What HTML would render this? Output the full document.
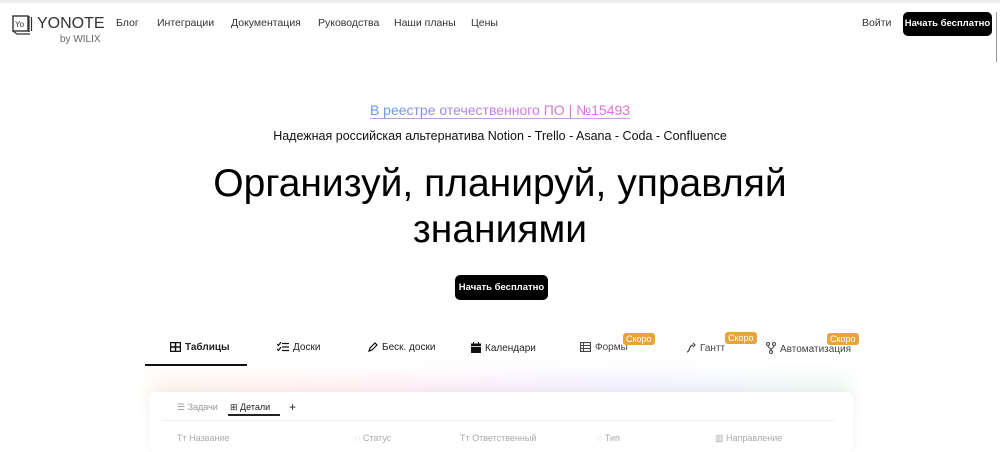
<!DOCTYPE html>
<html><head><meta charset="utf-8"><style>
*{margin:0;padding:0;box-sizing:border-box}
body{width:1000px;height:442px;overflow:hidden;background:#fff;font-family:"Liberation Sans",sans-serif;color:#111;position:relative}
.top{position:absolute;top:0;left:0;right:0;height:3px;background:#ececec}
.sb{position:absolute;right:3px;top:12px;width:1px;height:50px;background:#999}
.logo{position:absolute;left:12px;top:13px}
.nav{position:absolute;top:17px;left:116px;font-size:10.5px;color:#333}
.nav span{position:absolute;white-space:nowrap}
.btn{position:absolute;background:#000;color:#fff;font-size:9.5px;font-weight:bold;border-radius:5px;text-align:center;white-space:nowrap}
.c{position:absolute;left:0;right:0;text-align:center}
.tabs span{position:absolute;top:342px;font-size:10px;color:#222;white-space:nowrap}
.badge{position:absolute;background:#e8a33d;color:#fff;font-size:9px;border-radius:3px;padding:1px 3px}
.ic{display:inline-block;vertical-align:-2px;margin-right:4px}
</style></head><body>
<div class="top"></div><div class="sb"></div>
<div class="logo">
<svg width="22" height="22" viewBox="0 0 22 22"><rect x="1" y="3" width="15" height="15" fill="none" stroke="#333" stroke-width="1.4"/><path d="M17 3v16M19.5 4v14M1 18l4 3h13" fill="none" stroke="#333" stroke-width="1.2"/><text x="3" y="14" font-size="8" font-family="Liberation Sans" fill="#333">Yo</text></svg>
<span style="position:absolute;left:25px;top:2px;font-size:16px;color:#333">YONOTE</span>
<span style="position:absolute;left:48px;top:21px;font-size:10px;color:#666;white-space:nowrap">by WILIX</span>
</div>
<div class="nav">
<span style="left:0">Блог</span><span style="left:41px">Интеграции</span><span style="left:115px">Документация</span><span style="left:202px">Руководства</span><span style="left:278px">Наши планы</span><span style="left:355px">Цены</span>
</div>
<span style="position:absolute;left:862px;top:17px;font-size:10.5px;color:#333">Войти</span>
<div class="btn" style="left:903px;top:12px;width:89px;height:24px;line-height:24px">Начать бесплатно</div>
<div class="c" style="top:102px;font-size:14px"><span style="background:linear-gradient(90deg,#5b9be8,#c97be0,#e36cd8);-webkit-background-clip:text;color:transparent;border-bottom:1px solid #c39be8">В реестре отечественного ПО | №15493</span></div>
<div class="c" style="top:129px;font-size:12.5px;color:#111">Надежная российская альтернатива Notion - Trello - Asana - Coda - Confluence</div>
<div class="c" style="top:161px;font-size:39px;line-height:46px;color:#000">Организуй, планируй, управляй<br>знаниями</div>
<div class="btn" style="left:455px;top:275px;width:93px;height:25px;line-height:25px">Начать бесплатно</div>
<div style="position:absolute;left:150px;top:375px;width:700px;height:30px;background:linear-gradient(90deg,#fff5ec,#ffeef4,#f2efff,#eef9f2);filter:blur(8px)"></div>
<div class="tabs">
<span style="left:170px;font-weight:bold"><svg class="ic" width="11" height="10"><rect x=".5" y=".5" width="10" height="9" fill="none" stroke="#111" stroke-width="1.5"/><path d="M0 5h11M5.5 0v10" stroke="#111" stroke-width="1.5"/></svg>Таблицы</span>
<span style="left:277px"><svg class="ic" width="12" height="10"><path d="M0 2l1.5 1.5L4 0M0 7l1.5 1.5L4 5M5 1.5h7M5 5h7M5 8.5h7" stroke="#111" fill="none" stroke-width="1.2"/></svg>Доски</span>
<span style="left:368px"><svg class="ic" width="10" height="10"><path d="M1 9l1-3 5-5 2 2-5 5z" stroke="#111" fill="none" stroke-width="1.2"/></svg>Беск. доски</span>
<span style="left:471px"><svg class="ic" width="10" height="11"><rect x="0" y="1.5" width="10" height="9.5" fill="#111"/><path d="M2.5 0v2M7.5 0v2" stroke="#111"/><path d="M0 4.5h10" stroke="#fff" stroke-width=".8"/></svg>Календари</span>
<span style="left:580px;color:#444"><svg class="ic" width="11" height="10"><rect x=".5" y=".5" width="10" height="9" fill="none" stroke="#444" stroke-width="1.2"/><path d="M0 3.5h11M0 6.5h11M3.5 0v10" stroke="#444"/></svg>Формы</span>
<span style="left:686px;color:#444"><svg class="ic" width="10" height="11"><path d="M1 10c3 0 2-7 6-7M7 1l2 2-2 2" stroke="#444" fill="none" stroke-width="1.2"/></svg>Гантт</span>
<span style="left:766px;color:#444"><svg class="ic" width="10" height="12"><circle cx="2" cy="2" r="1.5" fill="none" stroke="#444"/><circle cx="8" cy="2" r="1.5" fill="none" stroke="#444"/><circle cx="5" cy="10" r="1.5" fill="none" stroke="#444"/><path d="M2 3.5c0 3 3 2 3 5M8 3.5c0 3-3 2-3 5" stroke="#444" fill="none"/></svg>Автоматизация</span>
</div>
<div class="badge" style="left:623px;top:333px">Скоро</div>
<div class="badge" style="left:725px;top:332px">Скоро</div>
<div class="badge" style="left:827px;top:333px">Скоро</div>
<div style="position:absolute;left:145px;top:364px;width:102px;height:2px;background:#111"></div>
<div style="position:absolute;left:149px;top:392px;width:704px;height:60px;background:#fff;border-radius:6px;box-shadow:0 0 10px rgba(0,0,0,0.06)"></div>
<span style="position:absolute;left:177px;top:402px;font-size:9px;color:#999">☰ Задачи</span>
<span style="position:absolute;left:230px;top:402px;font-size:9px;color:#222">⊞ Детали</span>
<div style="position:absolute;left:228px;top:414px;width:52px;height:2px;background:#222"></div>
<span style="position:absolute;left:289px;top:400px;font-size:12px;color:#222">+</span>
<div style="position:absolute;left:164px;top:420px;width:670px;height:1px;background:#eee"></div>
<div style="position:absolute;top:433px;font-size:9px;color:#aaa;width:1000px">
<span style="position:absolute;left:177px">Tт Название</span><span style="position:absolute;left:355px">◌ Статус</span><span style="position:absolute;left:460px">Tт Ответственный</span><span style="position:absolute;left:597px">◌ Тип</span><span style="position:absolute;left:715px">▥ Направление</span>
</div>
</body></html>
